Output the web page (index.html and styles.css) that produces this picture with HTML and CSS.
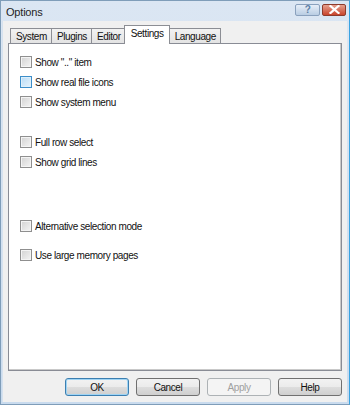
FILE: index.html
```html
<!DOCTYPE html>
<html>
<head>
<meta charset="utf-8">
<link rel="stylesheet" href="styles.css">
</head>
<body>
<div class="window">
  <div class="titlebar">
    <span class="title">Options</span>
    <div class="tbtns">
      <div class="tbtn help">?</div>
      <div class="tbtn close">
        <svg width="11" height="9" viewBox="0 0 11 9"><path d="M1.5 1 L9.5 8 M9.5 1 L1.5 8" stroke="#fff" stroke-width="2.2" stroke-linecap="square"/></svg>
      </div>
    </div>
  </div>
  <div class="client">
    <div class="tabs">
      <div class="tab">System</div>
      <div class="tab">Plugins</div>
      <div class="tab">Editor</div>
      <div class="tab active">Settings</div>
      <div class="tab">Language</div>
    </div>
    <div class="panel">
      <label class="row"><span class="cb"></span>Show ".." item</label>
      <label class="row"><span class="cb hover"></span>Show real file icons</label>
      <label class="row"><span class="cb"></span>Show system menu</label>
      <label class="row gap1"><span class="cb"></span>Full row select</label>
      <label class="row"><span class="cb"></span>Show grid lines</label>
      <label class="row gap2"><span class="cb"></span>Alternative selection mode</label>
      <label class="row gap3"><span class="cb"></span>Use large memory pages</label>
    </div>
    <div class="buttons">
      <div class="btn default">OK</div>
      <div class="btn">Cancel</div>
      <div class="btn disabled">Apply</div>
      <div class="btn">Help</div>
    </div>
  </div>
</div>
</body>
</html>
```
FILE: styles.css
```css
* { box-sizing: border-box; }
html, body { margin: 0; padding: 0; background: #fff; }
body { font-family: "Liberation Sans", Arial, sans-serif; font-size: 10px; letter-spacing: -0.4px; color: #000; }

.window {
  width: 350px;
  height: 405px;
  background: linear-gradient(#dbe6f3, #c9dbee);
  border: 1px solid #7f9db9;
  border-right-color: #3aa3e0;
  display: flex;
  flex-direction: column;
  padding: 0 2px 2px 1px;
}

.titlebar {
  height: 21px;
  display: flex;
  align-items: center;
  justify-content: space-between;
  padding: 0 1px 0 4px;
}
.title { font-size: 11px; letter-spacing: -0.2px; color: #1e1e1e; margin-top: 2px; }
.tbtns { display: flex; gap: 2px; margin-top: -3px; }
.tbtn {
  height: 12px;
  border-radius: 2px;
  display: flex;
  align-items: center;
  justify-content: center;
}
.help {
  width: 25px;
  background: linear-gradient(#e6eef8, #b9cde3);
  border: 1px solid #8aa1bd;
  color: #5d7fa6;
  font-weight: bold;
  font-size: 10px;
}
.close {
  width: 24px;
  background: linear-gradient(#e6a08e, #c9442c);
  border: 1px solid #8d3b2c;
}

.client {
  flex: 1;
  background: #f0f0f0;
  display: flex;
  flex-direction: column;
  padding: 4px 5px 6px 5px;
  border-left: 1px solid #d6e2ef;
}

.tabs {
  display: flex;
  padding-left: 2px;
  align-items: flex-end;
  height: 18px;
  position: relative;
  z-index: 1;
}
.tab {
  height: 15px;
  padding: 0 4px 0 5px;
  border: 1px solid #8c8e94;
  border-bottom: none;
  margin-right: -1px;
  background: linear-gradient(#f2f2f2, #e3e3e3);
  display: flex;
  align-items: center;
  font-size: 10px;
  color: #111;
}
.tab.active {
  height: 19px;
  margin-left: -1px;
  margin-right: -1px;
  margin-bottom: -1px;
  background: #fff;
  padding: 0 5px 3px 6px;
  position: relative;
}

.panel {
  height: 328px;
  background: #fff;
  border: 1px solid #898c95;
  box-shadow: inset -1px -1px 0 #c9c9c9;
  padding: 8px 0 0 11px;
  display: flex;
  flex-direction: column;
}

.row {
  height: 20px;
  display: flex;
  align-items: center;
  gap: 3px;
  color: #111;
}
.gap1 { margin-top: 20px; }
.gap2 { margin-top: 44px; }
.gap3 { margin-top: 9px; }

.cb {
  width: 12px;
  height: 12px;
  border: 1px solid #8f8f8f;
  background: linear-gradient(135deg, #d2d2d2, #f4f4f4);
  box-shadow: inset 0 0 0 1px #f4f4f4;
  flex: none;
}
.cb.hover {
  border-color: #3d8ec9;
  background: linear-gradient(135deg, #b9dcf6, #e6f3fc);
  box-shadow: inset 0 0 0 1px #def0fc;
}

.buttons {
  display: flex;
  justify-content: flex-end;
  gap: 7px;
  margin-top: 7px;
}
.btn {
  width: 64px;
  height: 18px;
  border: 1px solid #707070;
  border-radius: 3px;
  background: linear-gradient(#f2f2f2 0%, #ebebeb 50%, #dddddd 51%, #cfcfcf 100%);
  display: flex;
  align-items: center;
  justify-content: center;
  font-size: 10px;
  color: #111;
}
.btn.default {
  border-color: #3c7fb1;
  box-shadow: inset 0 0 0 1px #9fd4f4;
}
.btn.disabled {
  border-color: #adb2b5;
  background: #f4f4f4;
  color: #a0a0a0;
}
```
